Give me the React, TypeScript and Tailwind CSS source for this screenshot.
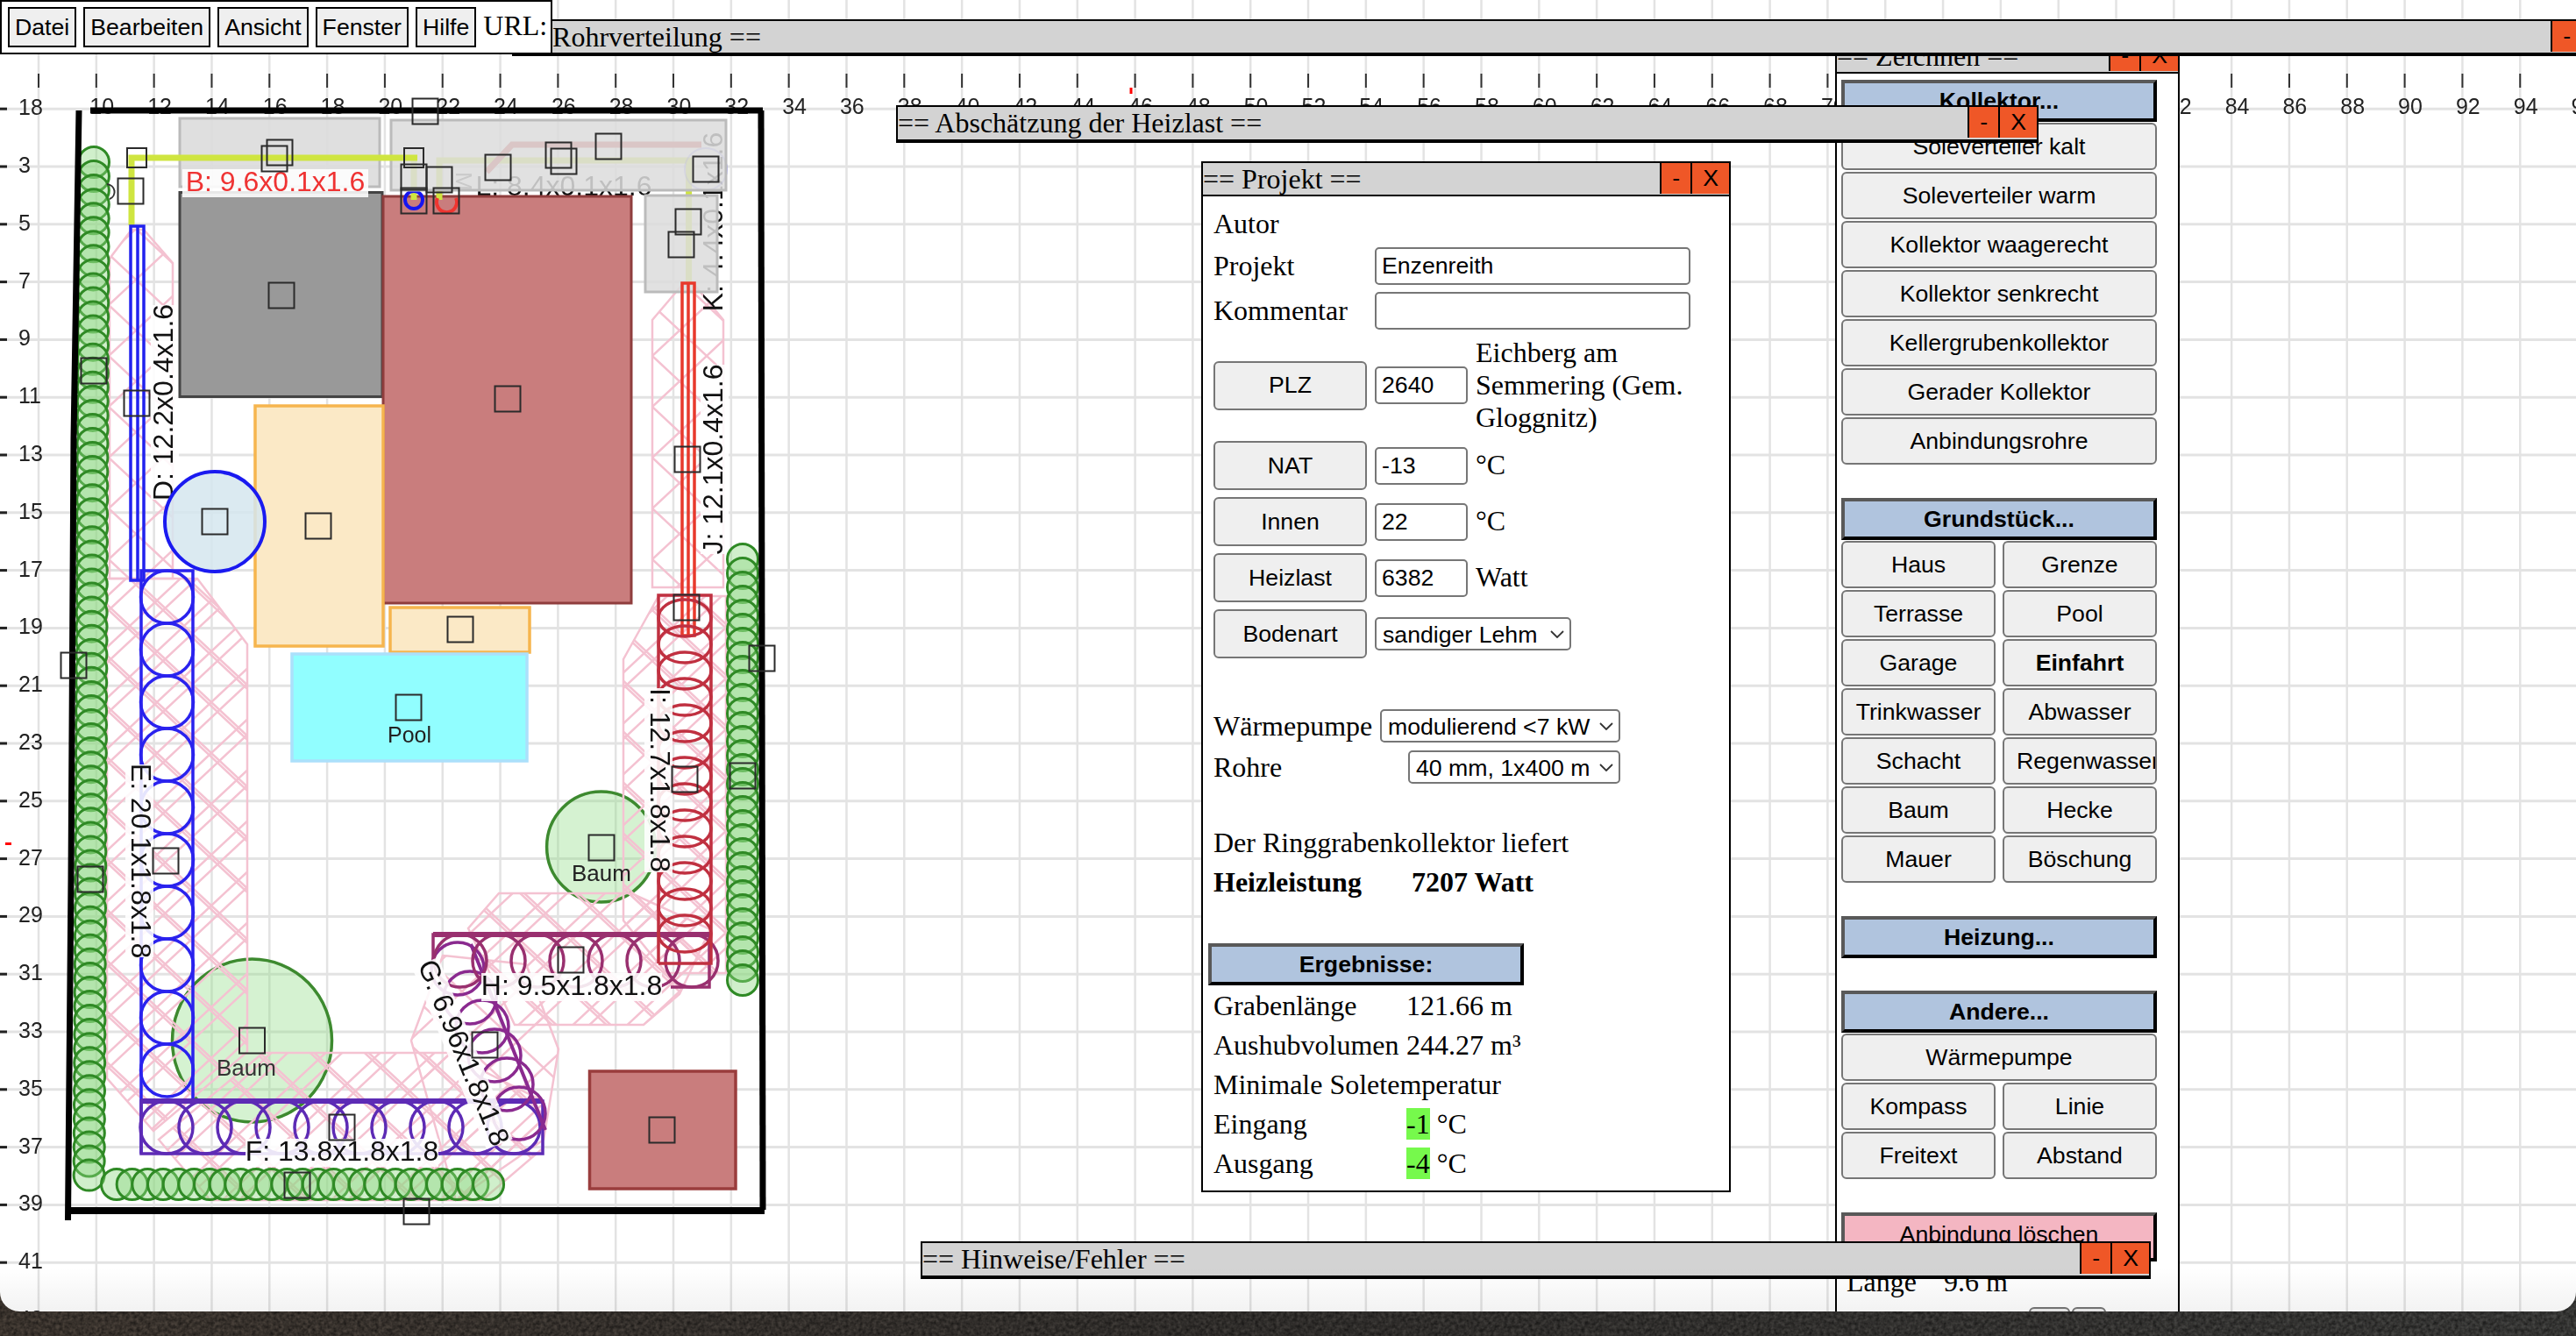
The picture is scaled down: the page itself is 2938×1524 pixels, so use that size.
import React from "react";

const GX = (i: number) => 44 + 65.82 * i;
const GY = (k: number) => 190 + 65.8 * k;

const PINK = "#f4c2d1";

function Rings({ pts, rx, ry, color, op = 1 }: { pts: [number, number][]; rx: number; ry: number; color: string; op?: number }) {
  return (
    <g fill="none" stroke={color} strokeWidth={3.5} opacity={op}>
      {pts.map((p, i) => (
        <ellipse key={i} cx={p[0]} cy={p[1]} rx={rx} ry={ry} />
      ))}
    </g>
  );
}

function Label({ x, y, r = 0, t, w, c = "#111", bg = true }: { x: number; y: number; r?: number; t: string; w: number; c?: string; bg?: boolean }) {
  return (
    <g transform={`translate(${x} ${y}) rotate(${r})`}>
      {bg && <rect x={-w / 2} y={-25} width={w} height={32} fill="#fff" fillOpacity={0.88} />}
      <text x={0} y={0} textAnchor="middle" fontSize={32} fill={c}>
        {t}
      </text>
    </g>
  );
}

function range(from: number, to: number, step: number) {
  const a: number[] = [];
  for (let v = from; step > 0 ? v <= to + 0.01 : v >= to; v += step) a.push(v);
  return a;
}

function Canvas() {
  const vLines = range(0, 44, 1);
  const hLines = range(-1, 20, 1);
  const handles: [number, number, number?][] = [
    [156, 180, 22], [149, 218], [313, 181], [319, 174], [321, 337], [485, 127], [472, 180, 22], [472, 202], [501, 205], [472, 229], [509, 229],
    [568, 191], [637, 177], [643, 184], [694, 167], [805, 193], [785, 253], [777, 279], [579, 455], [156, 460], [107, 423], [784, 524],
    [245, 595], [363, 600], [525, 718], [466, 807], [84, 759], [869, 751], [847, 885], [781, 889], [783, 693], [189, 982], [103, 1003],
    [686, 967], [651, 1095], [553, 1192], [287.5, 1187], [390, 1286], [339, 1352], [475, 1382], [755, 1289],
  ];
  const hedgeLeft: [number, number][] = range(0, 72, 1).map((i) => [107 - i * 0.075, 185 + i * 16.05]);
  const hedgeRight: [number, number][] = range(638, 1132, 16).map((y) => [847, y]);
  const hedgeBottom: [number, number][] = range(133, 558, 17.67).map((x) => [x, 1351]);
  const hedge = hedgeLeft.concat(hedgeRight, hedgeBottom);

  return (
    <svg className="absolute left-0 top-0 font-['Liberation_Sans',Arial,sans-serif] blur-[0.6px]" width={2938} height={1496} viewBox="0 0 2938 1496">
      <defs>
        <pattern id="hatchA" width={62} height={58} patternUnits="userSpaceOnUse">
          <path d="M0 0L62 58M62 0L0 58" stroke={PINK} strokeWidth={2.5} fill="none" />
        </pattern>
        <pattern id="hatchB" width={62} height={58} patternUnits="userSpaceOnUse" patternTransform="translate(24 18)">
          <path d="M0 0L62 58M62 0L0 58" stroke={PINK} strokeWidth={2.5} fill="none" />
        </pattern>
      </defs>

      {vLines.map((i) => (
        <line key={i} x1={GX(i)} x2={GX(i)} y1={0} y2={1496} stroke="#e3e3e3" strokeWidth={2.5} />
      ))}
      {hLines.map((k) => (
        <line key={k} x1={0} x2={2938} y1={GY(k)} y2={GY(k)} stroke="#e3e3e3" strokeWidth={3} />
      ))}

      {vLines.map((i) => (
        <line key={i} x1={GX(i)} x2={GX(i)} y1={84} y2={100} stroke="#333" strokeWidth={2} />
      ))}
      {vLines.filter((i) => i > 0).map((i) => (
        <text key={i} x={GX(i) - 7.5} y={130} fontSize={25} fill="#222">
          {8 + i * 2}
        </text>
      ))}
      {hLines.map((k) => (
        <g key={k}>
          <rect x={0} y={GY(k) - 1.5} width={8} height={3} fill="#222" />
          <text x={21} y={GY(k) + 7} fontSize={25} fill="#222">
            {k === -1 ? 18 : 3 + k * 2}
          </text>
        </g>
      ))}
      <rect x={1288.5} y={100} width={3} height={7} fill="#f00" />
      <rect x={6} y={961} width={7} height={3} fill="#f00" />

      <g fill="#86d97a" fillOpacity={0.35} stroke="#3d8a2f" strokeWidth={3.5}>
        <ellipse cx={685.6} cy={966} rx={62} ry={63} />
        <ellipse cx={287.5} cy={1187} rx={91} ry={93} />
      </g>

      <g fill="url(#hatchA)" stroke={PINK} strokeWidth={2.5}>
        <polygon points="150,262 125,295 125,660 197,660 197,300 164,262" />
        <polygon points="778,325 744,365 744,670 825,670 825,365 792,325" />
        <polygon points="122,660 122,1230 175,1290 282,1200 282,735 225,660" />
        <polygon points="751,680 711,752 711,1050 760,1110 828,1110 828,680" />
        <polygon points="569,1019 720,1019 810,1060 775,1134 734,1169 587,1169 534,1059" />
        <polygon points="505,1090 600,1100 637,1197 620,1300 520,1369 469,1187" />
        <polygon points="300,1201 510,1201 619,1256 619,1310 550,1369 240,1369 181,1300" />
      </g>
      <g fill="url(#hatchB)" stroke="none">
        <polygon points="122,660 122,1230 175,1290 282,1200 282,735 225,660" />
        <polygon points="751,680 711,752 711,1050 760,1110 828,1110 828,680" />
        <polygon points="569,1019 720,1019 810,1060 775,1134 734,1169 587,1169 534,1059" />
        <polygon points="300,1201 510,1201 619,1256 619,1310 550,1369 240,1369 181,1300" />
      </g>

      <Label x={197} y={459} r={-90} t="D: 12.2x0.4x1.6" w={222} />
      <Label x={824} y={524} r={-90} t="J: 12.1x0.4x1.6" w={216} />
      <Label x={824} y={253} r={-90} t="K: 4.4x0.1x1.6" w={200} bg={false} />
      <Label x={643} y={223} t="L: 8.4x0.1x1.6" w={200} bg={false} />
      <text transform="translate(520 196) rotate(90)" fontSize={26} fill="#555">
        M
      </text>

      <g fill="#8fd882" fillOpacity={0.42} stroke="#2f8a25" strokeWidth={3}>
        {hedge.map((p, i) => (
          <ellipse key={i} cx={p[0]} cy={p[1]} rx={17.5} ry={17.5} />
        ))}
      </g>

      <path d="M122 210A10 9 0 0 1 125 227" fill="none" stroke="#333" strokeWidth={2} />

      <rect x={205} y={219.5} width={231} height={233} fill="#999" stroke="#444" strokeWidth={3} />
      <rect x={437} y={224} width={283} height={464} fill="#c97d7d" stroke="#8f3d3d" strokeWidth={3} />
      <rect x={291} y={463} width={146} height={274} fill="#fbe9c6" stroke="#f6b54e" strokeWidth={3.5} />
      <rect x={445} y={693} width={159} height={51} fill="#fbe9c6" stroke="#f6b54e" strokeWidth={3.5} />
      <rect x={333} y={746} width={268} height={122} fill="#91feff" stroke="#abe0fb" strokeWidth={3.5} />
      <text x={467} y={847} textAnchor="middle" fontSize={25} fill="#222">
        Pool
      </text>
      <ellipse cx={245} cy={595} rx={57} ry={57} fill="#d5e6ef" fillOpacity={0.85} stroke="#1a1af0" strokeWidth={4} />
      <rect x={672.5} y={1222} width={166.5} height={134} fill="#c97d7d" stroke="#9a3d3d" strokeWidth={3.5} />

      <text x={686} y={1005} textAnchor="middle" fontSize={26} fill="#222">
        Baum
      </text>
      <text x={281} y={1227} textAnchor="middle" fontSize={26} fill="#333">
        Baum
      </text>

      {/* Leitungen unter den grauen Flächen */}
      <path d="M472 180V228" fill="none" stroke="#cfe540" strokeWidth={7} />
      <path d="M501 228V183H785.6V323" fill="none" stroke="#cfe540" strokeWidth={7} />
      <path d="M555 196L584 165H800" fill="none" stroke="#c94040" strokeWidth={7} />

      <circle cx={472} cy={228} r={10} fill="none" stroke="#1515f0" strokeWidth={4} />
      <path d="M499 226A11.5 11.5 0 1 0 520 226" fill="none" stroke="#ef3530" strokeWidth={4} />
      <circle cx={805} cy={193} r={24} fill="none" stroke="#1a1af0" strokeWidth={2} opacity={0.35} />

      {/* Graue Flächen */}
      <rect x={205} y={135} width={228} height={78} fill="#dcdcdc" fillOpacity={0.9} stroke="#bbb" strokeWidth={3} />
      <rect x={446} y={137} width={382} height={80} fill="#dcdcdc" fillOpacity={0.86} stroke="#bbb" strokeWidth={3} />
      <rect x={736} y={223} width={82} height={110} fill="#dcdcdc" fillOpacity={0.86} stroke="#bbb" strokeWidth={3} />

      <path d="M150 257V180H476" fill="none" stroke="#cfe540" strokeWidth={7} />

      <Label x={314} y={218} t="B: 9.6x0.1x1.6" w={212} c="#ef3333" />

      {/* Kollektoren */}
      <g fill="none" stroke="#2222ee" strokeWidth={3.5}>
        <path d="M149 258H164V662H149Z" />
        <path d="M157 258V662" />
      </g>
      <g fill="none" stroke="#e8392c" strokeWidth={3.5}>
        <path d="M778 323H792V725H778Z" />
        <path d="M785 323V725" />
      </g>

      <path d="M161 1316V651H220V1254" fill="none" stroke="#2a22ee" strokeWidth={3.5} />
      <Rings pts={range(681, 1230, 60).map((y) => [190.5, y] as [number, number])} rx={30} ry={30} color="#2a22ee" />

      <Rings pts={range(190, 600, 44).map((x) => [x, 1286] as [number, number])} rx={30} ry={30} color="#5d2bb5" />
      <path d="M161 1256H619V1316H161Z" fill="none" stroke="#5d2bb5" strokeWidth={3.5} />
      <path d="M161 1256H619" fill="none" stroke="#5d2bb5" strokeWidth={6} />

      <Rings pts={range(0, 5, 1).map((i) => [522 + i * 14, 1105 + i * 33] as [number, number])} rx={30} ry={30} color="#8a2a8f" />
      <path d="M537 1077L622 1289" fill="none" stroke="#8a2a8f" strokeWidth={4} />

      <Rings pts={range(525, 790, 44).map((x) => [x, 1096] as [number, number])} rx={30} ry={30} color="#99306f" />
      <path d="M494 1100V1066H809V1126H765" fill="none" stroke="#99306f" strokeWidth={3.5} />
      <path d="M494 1066H809" fill="none" stroke="#99306f" strokeWidth={6} />

      <path d="M751 1099V679H811V1099H751" fill="none" stroke="#c03040" strokeWidth={3.5} />
      <Rings pts={range(705, 1080, 30).map((y) => [781, y] as [number, number])} rx={30} ry={21} color="#c03040" />

      <Label x={742} y={890} r={90} t="I: 12.7x1.8x1.8" w={210} />
      <Label x={150} y={982} r={90} t="E: 20.1x1.8x1.8" w={220} />
      <Label x={519} y={1205} r={67.7} t="G: 6.96x1.8x1.8" w={224} />
      <Label x={652} y={1135} t="H: 9.5x1.8x1.8" w={206} />
      <Label x={390} y={1324} t="F: 13.8x1.8x1.8" w={220} />

      {/* Grenze */}
      <g fill="none" stroke="#000">
        <path d="M103 126H870" strokeWidth={7} />
        <path d="M90 126L84 500L81 1004L77.5 1392" strokeWidth={7} />
        <path d="M868 126L870 1380" strokeWidth={7} />
        <path d="M80 1381H872" strokeWidth={8} />
      </g>

      <g fill="none" stroke="#2b2b2b" strokeWidth={2}>
        {handles.map((h, i) => {
          const s = h[2] ?? 29;
          return <rect key={i} x={h[0] - s / 2} y={h[1] - s / 2} width={s} height={s} />;
        })}
      </g>
    </svg>
  );
}

function WinBar({ title, className }: { title: string; className?: string }) {
  return (
    <div className={`flex items-start justify-between bg-[#d3d3d3] font-['Liberation_Serif',serif] text-[32px] leading-[37px] whitespace-nowrap text-black ${className ?? ""}`}>
      <span>{title}</span>
      <div className="flex font-['Liberation_Sans',sans-serif] text-[26.67px] leading-[35px]">
        <span className="border-l-2 border-black bg-[#ef5727] px-3">-</span>
        <span className="border-l-2 border-black bg-[#ef5727] px-3">X</span>
      </div>
    </div>
  );
}

function Btn({ children, className }: { children: React.ReactNode; className?: string }) {
  return (
    <button className={`block h-[54px] overflow-hidden whitespace-nowrap rounded-[6px] border-2 border-[#767676] bg-[#efefef] font-['Liberation_Sans',sans-serif] text-[26.67px] text-black ${className ?? ""}`}>
      {children}
    </button>
  );
}

function Head({ children, pink }: { children: React.ReactNode; pink?: boolean }) {
  return (
    <div className={`flex items-center justify-center border-4 border-t-[#595959] border-l-[#595959] border-r-black border-b-black font-['Liberation_Sans',sans-serif] text-[26.67px] text-black ${pink ? "h-[56px] bg-[#f4b6c2] pb-[6px]" : "h-[48px] bg-[#b0c4de] font-bold"}`}>
      {children}
    </div>
  );
}

function Field({ value, className }: { value?: string; className?: string }) {
  return (
    <input
      readOnly
      value={value ?? ""}
      className={`h-[43px] rounded-[5px] border-2 border-[#767676] bg-white px-[6px] font-['Liberation_Sans',sans-serif] text-[26.67px] text-black outline-none ${className ?? ""}`}
    />
  );
}

function Select({ value, className }: { value: string; className?: string }) {
  return (
    <div className={`relative h-[38px] shrink-0 ${className ?? ""}`}>
      <select className="h-full w-full appearance-none rounded-[5px] border-2 border-[#767676] bg-white pl-[7px] font-['Liberation_Sans',sans-serif] text-[26.67px] text-black">
        <option>{value}</option>
      </select>
      <svg className="absolute right-[8px] top-[15px]" width={16} height={9} viewBox="0 0 16 9" fill="none" stroke="#333" strokeWidth={1.8}>
        <path d="M1 1L8 8L15 1" />
      </svg>
    </div>
  );
}

function FormRow({ label, value, unit, w = "w-[106px]" }: { label: string; value: string; unit: string; w?: string }) {
  return (
    <div className="mt-[8px] flex h-[56px] items-center">
      <Btn className="h-[56px] w-[175px]">{label}</Btn>
      <Field value={value} className={`ml-[9px] ${w}`} />
      <span className="ml-[9px] mt-[-2px]">{unit}</span>
    </div>
  );
}

function ResultRow({ label, children }: { label: string; children: React.ReactNode }) {
  return (
    <div className="mt-[8px] flex h-[37px]">
      <span className="w-[220px] shrink-0 whitespace-nowrap">{label}</span>
      <span className="whitespace-nowrap">{children}</span>
    </div>
  );
}

function Projekt() {
  return (
    <div className="absolute left-[1370px] top-[184px] z-20 h-[1176px] w-[604px] border-2 border-black bg-white font-['Liberation_Serif',serif] text-[32px] leading-[37px] text-black">
      <WinBar title="== Projekt ==" className="h-[38px] border-b-2 border-black" />
      <div className="pl-[12px]">
        <div className="mt-[13px] h-[37px]">Autor</div>
        <div className="mt-[8px] flex h-[43px] items-center">
          <span className="w-[184px]">Projekt</span>
          <Field value="Enzenreith" className="w-[360px]" />
        </div>
        <div className="mt-[8px] flex h-[43px] items-center">
          <span className="w-[184px]">Kommentar</span>
          <Field className="w-[360px]" />
        </div>
        <div className="mt-[8px] flex h-[111px] items-center">
          <Btn className="h-[56px] w-[175px]">PLZ</Btn>
          <Field value="2640" className="ml-[9px] w-[106px]" />
          <span className="ml-[9px] w-[270px]">Eichberg am Semmering (Gem. Gloggnitz)</span>
        </div>
        <FormRow label="NAT" value="-13" unit="°C" />
        <FormRow label="Innen" value="22" unit="°C" />
        <FormRow label="Heizlast" value="6382" unit="Watt" />
        <div className="mt-[8px] flex h-[56px] items-center">
          <Btn className="h-[56px] w-[175px]">Bodenart</Btn>
          <Select value="sandiger Lehm" className="ml-[9px] w-[224px]" />
        </div>
        <div className="mt-[58px] flex h-[38px] w-[464px] items-center justify-between">
          <span>Wärmepumpe</span>
          <Select value="modulierend <7 kW" className="w-[274px]" />
        </div>
        <div className="mt-[9px] flex h-[38px] w-[464px] items-center justify-between">
          <span>Rohre</span>
          <Select value="40 mm, 1x400 m" className="w-[242px]" />
        </div>
        <div className="mt-[49px] h-[37px]">Der Ringgrabenkollektor liefert</div>
        <div className="mt-[8px] flex h-[37px] font-bold">
          <span className="w-[226px]">Heizleistung</span>
          <span>7207 Watt</span>
        </div>
        <div className="ml-[-6px] mt-[51px] w-[360px]">
          <Head>Ergebnisse:</Head>
        </div>
        <div className="mt-[-3px]">
          <ResultRow label="Grabenlänge">121.66 m</ResultRow>
          <ResultRow label="Aushubvolumen">244.27 m³</ResultRow>
          <ResultRow label="Minimale Soletemperatur">{""}</ResultRow>
          <ResultRow label="Eingang">
            <span className="bg-[#76f94c]">-1</span> °C
          </ResultRow>
          <ResultRow label="Ausgang">
            <span className="bg-[#76f94c]">-4</span> °C
          </ResultRow>
        </div>
      </div>
    </div>
  );
}

function Zeichnen() {
  const kollektor = ["Soleverteiler kalt", "Soleverteiler warm", "Kollektor waagerecht", "Kollektor senkrecht", "Kellergrubenkollektor", "Gerader Kollektor", "Anbindungsrohre"];
  const grund = ["Haus", "Grenze", "Terrasse", "Pool", "Garage", "Einfahrt", "Trinkwasser", "Abwasser", "Schacht", "Regenwasser", "Baum", "Hecke", "Mauer", "Böschung"];
  return (
    <div className="absolute left-[2093px] top-[44px] z-10 h-[1460px] w-[393px] border-2 border-black bg-white font-['Liberation_Serif',serif] text-[32px] leading-[37px] text-black">
      <WinBar title="== Zeichnen ==" className="h-[38px] border-b-2 border-black" />
      <div className="ml-[5px] w-[360px] pt-[7px]">
        <Head>Kollektor...</Head>
        <div className="mt-[1px] flex flex-col gap-[2px]">
          {kollektor.map((k) => (
            <Btn key={k} className="w-full">
              {k}
            </Btn>
          ))}
        </div>
        <div className="mt-[38px]">
          <Head>Grundstück...</Head>
        </div>
        <div className="mt-[1px] grid grid-cols-[176px_176px] gap-x-[8px] gap-y-[2px]">
          {grund.map((g) => (
            <Btn key={g} className={`w-full ${g === "Einfahrt" ? "font-bold" : ""} ${g === "Regenwasser" ? "px-[14px]" : ""}`}>
              {g}
            </Btn>
          ))}
        </div>
        <div className="mt-[38px]">
          <Head>Heizung...</Head>
        </div>
        <div className="mt-[37px]">
          <Head>Andere...</Head>
        </div>
        <Btn className="mt-[1px] w-full">Wärmepumpe</Btn>
        <div className="mt-[2px] grid grid-cols-[176px_176px] gap-x-[8px] gap-y-[2px]">
          {["Kompass", "Linie", "Freitext", "Abstand"].map((g) => (
            <Btn key={g} className="w-full">
              {g}
            </Btn>
          ))}
        </div>
        <div className="mt-[38px]">
          <Head pink>Anbindung löschen</Head>
        </div>
        <div className="mt-[5px] flex h-[37px] pl-[6px]">
          <span className="w-[111px]">Länge</span>
          <span>9.6 m</span>
        </div>
        <div className="ml-[214px] mt-[10px] flex gap-[2px]">
          <Btn className="w-[47px]">{""}</Btn>
          <Btn className="w-[39px]">{""}</Btn>
        </div>
      </div>
    </div>
  );
}

function Menu() {
  return (
    <div className="absolute left-0 top-0 z-40 flex h-[62px] w-[630px] items-center gap-[8px] border-2 border-black bg-white pl-[7px] font-['Liberation_Serif',serif] text-[32px] text-black">
      {["Datei", "Bearbeiten", "Ansicht", "Fenster", "Hilfe"].map((m) => (
        <button key={m} className="h-[46px] border-2 border-black bg-[#efefef] px-[6px] font-['Liberation_Sans',sans-serif] text-[26.67px]">
          {m}
        </button>
      ))}
      <span className="mt-[-5px]">URL:</span>
    </div>
  );
}

export default function App() {
  return (
    <div className="relative h-[1524px] w-[2938px] overflow-hidden bg-linear-to-r from-[#4b423a] via-[#3d3a37] to-[#454543]">
      <svg className="absolute bottom-0 left-0" width={2938} height={40} aria-hidden="true">
        <filter id="desk">
          <feTurbulence type="fractalNoise" baseFrequency="0.25" numOctaves={3} />
          <feColorMatrix values="0 0 0 0 0  0 0 0 0 0  0 0 0 0 0  0.9 0 0 0 -0.2" />
        </filter>
        <rect width={2938} height={40} filter="url(#desk)" />
      </svg>
      <div className="relative h-[1496px] w-full overflow-hidden rounded-b-[22px] bg-white">
        <Canvas />
        <Zeichnen />
        <Projekt />
        <WinBar title="== Rohrverteilung ==" className="absolute left-[584px] top-[22px] z-30 h-[42px] w-[2406px] border-x-2 border-t-2 border-b-4 border-black" />
        <WinBar title="== Abschätzung der Heizlast ==" className="absolute left-[1022px] top-[120px] z-30 h-[43px] w-[1303px] border-x-2 border-t-2 border-b-4 border-black" />
        <WinBar title="== Hinweise/Fehler ==" className="absolute left-[1050px] top-[1416px] z-30 h-[43px] w-[1403px] border-x-2 border-t-2 border-b-4 border-black" />
        <Menu />
        <div className="pointer-events-none absolute inset-x-0 bottom-0 z-50 h-[50px] bg-linear-to-b from-transparent to-black/5" />
      </div>
    </div>
  );
}
